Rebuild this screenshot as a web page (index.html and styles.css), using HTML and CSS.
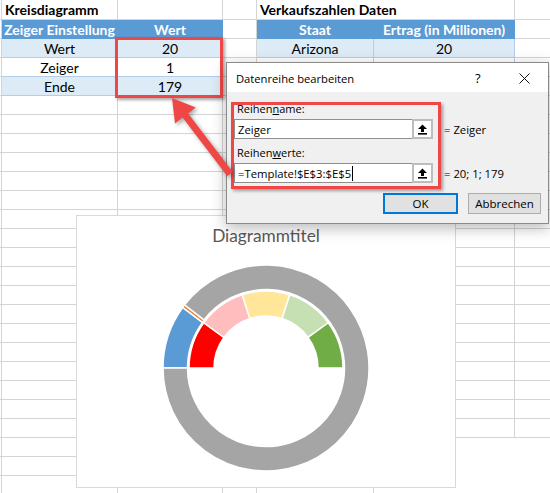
FILE: index.html
```html
<!DOCTYPE html>
<html lang="de">
<head>
<meta charset="utf-8">
<title>Kreisdiagramm</title>
<link rel="stylesheet" href="styles.css">
</head>
<body>
<div class="sheet">
  <div class="c"></div><div class="c title">Kreisdiagramm</div><div class="c"></div><div class="c"></div><div class="c title over">Verkaufszahlen Daten</div><div class="c"></div><div class="c"></div>
  <div class="c"></div><div class="c hd">Zeiger Einstellung</div><div class="c hd">Wert</div><div class="c"></div><div class="c hd">Staat</div><div class="c hd">Ertrag (in Millionen)</div><div class="c"></div>
  <div class="c"></div><div class="c lt sel">Wert</div><div class="c lt">20</div><div class="c"></div><div class="c lt">Arizona</div><div class="c lt">20</div><div class="c"></div>
  <div class="c"></div><div class="c wt sel">Zeiger</div><div class="c wt">1</div><div class="c"></div><div class="c wt"></div><div class="c wt"></div><div class="c"></div>
  <div class="c"></div><div class="c lt sel">Ende</div><div class="c lt">179</div><div class="c"></div><div class="c lt"></div><div class="c lt"></div><div class="c"></div>
  <div class="c"></div><div class="c"></div><div class="c"></div><div class="c"></div><div class="c"></div><div class="c"></div><div class="c"></div>
  <div class="c"></div><div class="c"></div><div class="c"></div><div class="c"></div><div class="c"></div><div class="c"></div><div class="c"></div>
  <div class="c"></div><div class="c"></div><div class="c"></div><div class="c"></div><div class="c"></div><div class="c"></div><div class="c"></div>
  <div class="c"></div><div class="c"></div><div class="c"></div><div class="c"></div><div class="c"></div><div class="c"></div><div class="c"></div>
  <div class="c"></div><div class="c"></div><div class="c"></div><div class="c"></div><div class="c"></div><div class="c"></div><div class="c"></div>
  <div class="c"></div><div class="c"></div><div class="c"></div><div class="c"></div><div class="c"></div><div class="c"></div><div class="c"></div>
  <div class="c"></div><div class="c"></div><div class="c"></div><div class="c"></div><div class="c"></div><div class="c"></div><div class="c"></div>
  <div class="c"></div><div class="c"></div><div class="c"></div><div class="c"></div><div class="c"></div><div class="c"></div><div class="c"></div>
  <div class="c"></div><div class="c"></div><div class="c"></div><div class="c"></div><div class="c"></div><div class="c"></div><div class="c"></div>
  <div class="c"></div><div class="c"></div><div class="c"></div><div class="c"></div><div class="c"></div><div class="c"></div><div class="c"></div>
  <div class="c"></div><div class="c"></div><div class="c"></div><div class="c"></div><div class="c"></div><div class="c"></div><div class="c"></div>
  <div class="c"></div><div class="c"></div><div class="c"></div><div class="c"></div><div class="c"></div><div class="c"></div><div class="c"></div>
  <div class="c"></div><div class="c"></div><div class="c"></div><div class="c"></div><div class="c"></div><div class="c"></div><div class="c"></div>
  <div class="c"></div><div class="c"></div><div class="c"></div><div class="c"></div><div class="c"></div><div class="c"></div><div class="c"></div>
  <div class="c"></div><div class="c"></div><div class="c"></div><div class="c"></div><div class="c"></div><div class="c"></div><div class="c"></div>
  <div class="c"></div><div class="c"></div><div class="c"></div><div class="c"></div><div class="c"></div><div class="c"></div><div class="c"></div>
  <div class="c"></div><div class="c"></div><div class="c"></div><div class="c"></div><div class="c"></div><div class="c"></div><div class="c"></div>
  <div class="c"></div><div class="c"></div><div class="c"></div><div class="c"></div><div class="c"></div><div class="c"></div><div class="c"></div>
  <div class="c"></div><div class="c"></div><div class="c"></div><div class="c"></div><div class="c"></div><div class="c void"></div><div class="c void"></div>
  <div class="c"></div><div class="c"></div><div class="c"></div><div class="c"></div><div class="c"></div><div class="c void"></div><div class="c void"></div>
  <div class="c"></div><div class="c"></div><div class="c"></div><div class="c"></div><div class="c"></div><div class="c void"></div><div class="c void"></div>
</div>

<div class="hl hl-cells"></div>

<div class="chart">
  <div class="chart-title">Diagrammtitel</div>
  <svg class="donut" width="210" height="210" viewBox="0 0 210 210">
    <g stroke="#fff" stroke-width="1.5" stroke-linejoin="round">
      <path fill="#5b9bd5" d="M2 105 A103 103 0 0 1 21.67 44.46 L41.5 59.4 A78.5 78.5 0 0 0 26.5 105 Z"/>
      <path fill="#ed7d31" d="M21.67 44.46 A103 103 0 0 1 23.61 41.87 L42.98 56.9 A78.5 78.5 0 0 0 41.5 59.4 Z"/>
      <path fill="#a5a5a5" d="M23.61 41.87 A103 103 0 1 1 2 105 L26.5 105 A78.5 78.5 0 1 0 42.98 56.9 Z"/>
      <path fill="#ff0000" d="M28 105 A77 77 0 0 1 42.71 59.74 L62.93 74.43 A52 52 0 0 0 53 105 Z"/>
      <path fill="#ffbdbd" d="M42.71 59.74 A77 77 0 0 1 81.21 31.77 L88.93 55.55 A52 52 0 0 0 62.93 74.43 Z"/>
      <path fill="#ffe699" d="M81.21 31.77 A77 77 0 0 1 128.79 31.77 L121.07 55.55 A52 52 0 0 0 88.93 55.55 Z"/>
      <path fill="#c6e0b4" d="M128.79 31.77 A77 77 0 0 1 167.29 59.74 L147.07 74.43 A52 52 0 0 0 121.07 55.55 Z"/>
      <path fill="#70ad47" d="M167.29 59.74 A77 77 0 0 1 182 105 L157 105 A52 52 0 0 0 147.07 74.43 Z"/>
    </g>
  </svg>
</div>

<div class="dialog">
  <div class="dlg-title">
    <span class="dlg-name">Datenreihe bearbeiten</span>
    <span class="help">?</span>
    <svg class="close" width="11" height="11" viewBox="0 0 11 11"><path d="M0.5 0.5 L10.5 10.5 M10.5 0.5 L0.5 10.5" stroke="#111" stroke-width="1"/></svg>
  </div>
  <div class="dlg-body">
    <div class="form">
      <div class="lbl">Reihen<u>n</u>ame:</div><div></div>
      <div class="field"><span class="val">Zeiger</span><span class="pick"><svg width="11" height="11" viewBox="0 0 11 11"><path d="M5.5 0.5 L10 5 H7 V8 H4 V5 H1 Z" fill="#000"/><rect x="1" y="9" width="9" height="1.6" fill="#000"/></svg></span></div>
      <div class="res">= Zeiger</div>
      <div class="lbl lbl2">Reihen<u>w</u>erte:</div><div></div>
      <div class="field"><span class="val">=Template!$E$3:$E$5<span class="caret"></span></span><span class="pick"><svg width="11" height="11" viewBox="0 0 11 11"><path d="M5.5 0.5 L10 5 H7 V8 H4 V5 H1 Z" fill="#000"/><rect x="1" y="9" width="9" height="1.6" fill="#000"/></svg></span></div>
      <div class="res">= 20; 1; 179</div>
    </div>
    <div class="buttons">
      <div class="btn ok">OK</div>
      <div class="btn">Abbrechen</div>
    </div>
  </div>
  <div class="hl hl-form"></div>
</div>

<svg class="arrow" width="550" height="493" viewBox="0 0 550 493">
  <polygon fill="#ef4646" points="172,98 195.7,107.6 188.1,113.4 232.8,171.9 227.2,176.1 182.6,117.6 175,123.4"/>
</svg>
</body>
</html>
```
FILE: styles.css
```css
* { box-sizing: border-box; }
html, body { margin: 0; padding: 0; }
body {
  width: 550px;
  height: 493px;
  overflow: hidden;
  position: relative;
  background: #fff;
  font-family: Lato, "Liberation Sans", sans-serif;
}

/* spreadsheet grid */
.sheet {
  display: grid;
  grid-template-columns: 2px 116px 105px 34px 117px 141px 36px;
  grid-template-rows: 20px;
  grid-auto-rows: 19px;
  font-size: 14px;
  color: #000;
}
.c {
  border-right: 1px solid #d4d4d4;
  border-bottom: 1px solid #d4d4d4;
  display: flex;
  align-items: center;
  justify-content: center;
  white-space: nowrap;
  overflow: hidden;
  line-height: 1;
  padding-top: 1px;
}
.title {
  justify-content: flex-start;
  font-weight: bold;
  padding-left: 3px;
}
.over { overflow: visible; border-right-color: transparent; position: relative; z-index: 1; }
.hd {
  background: #5b9bd5;
  border-color: #5b9bd5;
  color: #fff;
  font-weight: bold;
}
.lt { background: #ddebf7; border-color: #b4cde8; }
.wt { background: #fff; border-color: #b4cde8; }
.sel { border-right: 1px dashed #1e7145; }
.void { border-color: transparent; }

/* red highlight frames */
.hl {
  position: absolute;
  border: 3px solid #ef4646;
  box-shadow: 2px 2px 3px rgba(0, 0, 0, 0.35);
  pointer-events: none;
}
.hl-cells { left: 115px; top: 37px; width: 108px; height: 61px; }
.hl-form { left: 4px; top: 39px; width: 210px; height: 87px; }

/* chart */
.chart {
  position: absolute;
  left: 76px;
  top: 215px;
  width: 380px;
  height: 273px;
  border: 1px solid #d9d9d9;
  background: #fff;
  display: flex;
  flex-direction: column;
  align-items: center;
}
.chart-title {
  margin-top: 8px;
  height: 24px;
  line-height: 24px;
  font-size: 17.3px;
  color: #595959;
}
.donut { display: block; margin-top: 15px; margin-left: -1px; }

/* dialog */
.dialog {
  position: absolute;
  left: 226px;
  top: 62px;
  width: 323px;
  height: 162px;
  border: 1px solid #8a8a8a;
  background: #f0f0f0;
  box-shadow: 0 4px 14px rgba(0, 0, 0, 0.28);
  font-family: "Open Sans", "Noto Sans", sans-serif;
  font-size: 11px;
  color: #000;
}
.dlg-title {
  height: 29px;
  background: #fff;
  display: flex;
  align-items: center;
  padding: 1px 0 0 9px;
}
.dlg-name { flex: 1; font-size: 11.2px; }
.help { width: 14px; margin-right: 30px; font-size: 13px; }
.close { display: block; margin-right: 18px; }
.dlg-body { padding: 9px 7px 0 7px; }
.form {
  display: grid;
  grid-template-columns: 199px auto;
  grid-template-rows: 16px 20px 20px 20px;
  column-gap: 11px;
  row-gap: 2px;
  align-items: center;
}
.lbl { line-height: 16px; padding-left: 3px; }
.lbl2 { align-self: end; }
.field {
  height: 20px;
  border: 1px solid #8f8f8f;
  background: #fff;
  display: flex;
  align-items: center;
}
.val { flex: 1; padding-left: 3px; display: flex; align-items: center; white-space: nowrap; font-size: 11.3px; }
.caret { display: inline-block; width: 1px; height: 15px; background: #000; margin-left: 1px; }
.pick {
  width: 21px;
  height: 20px;
  margin: -1px -1px -1px 0;
  border: 2px solid #bdbdbd;
  background: #fff;
  display: flex;
  align-items: center;
  justify-content: center;
}
.pick svg { display: block; }
.res { white-space: nowrap; font-size: 11.3px; }
.buttons {
  display: flex;
  justify-content: flex-end;
  gap: 10px;
  margin-top: 10px;
}
.btn {
  width: 73px;
  height: 21px;
  border: 1px solid #adadad;
  background: #e1e1e1;
  display: flex;
  align-items: center;
  justify-content: center;
  font-size: 11.5px;
}
.btn.ok { width: 75px; border: 2px solid #0078d7; }

/* annotation arrow */
.arrow {
  position: absolute;
  left: 0;
  top: 0;
  pointer-events: none;
  filter: drop-shadow(2px 2px 2px rgba(0, 0, 0, 0.35));
}
```
